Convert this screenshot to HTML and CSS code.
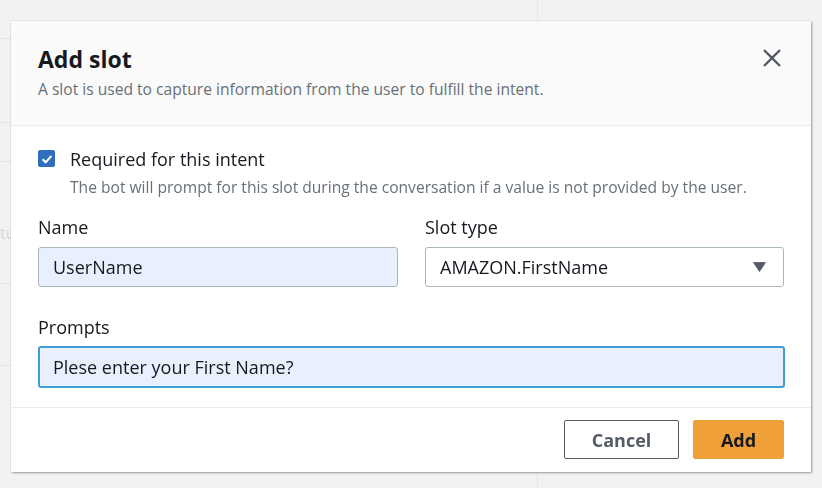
FILE: index.html
```html
<!DOCTYPE html>
<html>
<head>
<meta charset="utf-8">
<link rel="stylesheet" href="styles.css">
</head>
<body>
<div class="page">
  <div class="panel">
    <div class="row r1"></div>
    <div class="row r2"></div>
    <div class="row r3"></div>
    <div class="row r4"><span class="ghost">tu</span></div>
    <div class="row r5"></div>
  </div>
</div>

<div class="modal">
  <div class="modal-header">
    <div class="titles">
      <h1 class="title">Add slot</h1>
      <p class="subtitle">A slot is used to capture information from the user to fulfill the intent.</p>
    </div>
    <button class="close" aria-label="Close">
      <svg width="18" height="18" viewBox="0 0 18 18"><path d="M1 1L17 17M17 1L1 17" stroke="#545b64" stroke-width="2.3" fill="none"/></svg>
    </button>
  </div>
  <div class="modal-body">
    <div class="check-row">
      <span class="checkbox">
        <svg width="12" height="12" viewBox="0 0 12 12"><path d="M1.6 6.2L4.7 9.2L10.4 2.8" stroke="#fff" stroke-width="2" fill="none"/></svg>
      </span>
      <div class="check-text">
        <div class="check-label">Required for this intent</div>
        <div class="check-desc">The bot will prompt for this slot during the conversation if a value is not provided by the user.</div>
      </div>
    </div>
    <div class="grid">
      <div class="field">
        <label class="label">Name</label>
        <div class="input filled">UserName</div>
      </div>
      <div class="field">
        <label class="label">Slot type</label>
        <div class="input select">
          <span>AMAZON.FirstName</span>
          <svg width="13" height="10" viewBox="0 0 13 10"><path d="M0.5 0.5H12.5L6.5 9.5Z" fill="#545b64" stroke="#545b64" stroke-width="0.8" stroke-linejoin="round"/></svg>
        </div>
      </div>
    </div>
    <div class="field prompts">
      <label class="label">Prompts</label>
      <div class="input filled focused">Plese enter your First Name?</div>
    </div>
  </div>
  <div class="modal-footer">
    <button class="btn btn-cancel">Cancel</button>
    <button class="btn btn-add">Add</button>
  </div>
</div>
</body>
</html>
```

FILE: styles.css
```css
* { box-sizing: border-box; }
html, body { margin: 0; padding: 0; }
body {
  background: #f2f2f2;
  font-family: "Open Sans", "Noto Sans", sans-serif;
  color: #16191f;
  width: 822px;
  height: 488px;
  overflow: hidden;
}
.page { height: 488px; }
.panel {
  width: 538px;
  height: 488px;
  border-right: 1px solid #e6e6e6;
}
.row { border-bottom: 1px solid #e4e4e4; }
.r1 { height: 39px; }
.r2 { height: 84px; }
.r3 { height: 39px; }
.r4 { height: 122px; padding-top: 60px; }
.r5 { height: 82px; }
.ghost { display: inline-block; color: #d6d6d6; font-size: 16px; line-height: 18px; }

.modal {
  position: fixed;
  left: 11px;
  top: 21px;
  width: 800px;
  height: 451px;
  background: #fff;
  box-shadow: 1px 1px 2px rgba(0,0,0,0.35), 0 0 1px rgba(0,0,0,0.25);
  display: flex;
  flex-direction: column;
}
.modal-header {
  background: #fafafa;
  border-bottom: 1px solid #eaeded;
  height: 105px;
  flex: none;
  padding: 23px 30px 0 27px;
  display: flex;
  justify-content: space-between;
  align-items: flex-start;
}
.title {
  margin: 0;
  font-size: 23px;
  font-weight: 700;
  line-height: 30px;
  color: #16191f;
}
.subtitle {
  margin: 5px 0 0;
  font-size: 15.6px;
  line-height: 20px;
  color: #687078;
}
.close {
  background: none;
  border: 0;
  padding: 0;
  margin-top: 5px;
  width: 18px;
  height: 18px;
  display: flex;
}

.modal-body {
  flex: 1;
  padding: 21px 27px 0 27px;
  border-bottom: 1px solid #eaeded;
}
.check-row { display: flex; gap: 15px; }
.checkbox {
  flex: none;
  width: 17px;
  height: 17px;
  margin-top: 3px;
  background: #2f6eba;
  border-radius: 2px;
  display: flex;
  align-items: center;
  justify-content: center;
}
.check-label { font-size: 18px; line-height: 24px; }
.check-desc { font-size: 15.6px; line-height: 20px; color: #687078; margin-top: 6px; }

.grid {
  display: grid;
  grid-template-columns: 360px 359px;
  column-gap: 27px;
  margin-top: 18px;
}
.field { display: flex; flex-direction: column; }
.label { font-size: 18px; line-height: 24px; margin-bottom: 8px; }
.prompts { margin-top: 28px; }
.prompts .label { margin-bottom: 7px; }
.input {
  height: 40px;
  border: 1px solid #aab7b8;
  border-radius: 3px;
  font-size: 18px;
  padding: 0 14px;
  display: flex;
  align-items: center;
  color: #16191f;
}
.filled { background: #e8f0fe; }
.select { justify-content: space-between; padding-right: 17px; }
.focused {
  border: 2px solid #3f9fcf;
  height: 42px;
  padding-left: 13px;
  width: 747px;
}

.modal-footer {
  height: 64px;
  flex: none;
  display: flex;
  justify-content: flex-end;
  align-items: flex-start;
  gap: 14px;
  padding: 12px 27px 0 0;
}
.btn {
  height: 39px;
  font-family: inherit;
  font-size: 18px;
  font-weight: 700;
  border-radius: 2px;
  cursor: pointer;
}
.btn-cancel {
  width: 115px;
  background: #fff;
  border: 1px solid #545b64;
  color: #545b64;
}
.btn-add {
  width: 91px;
  background: #f0a038;
  border: 1px solid #f0a038;
  color: #16191f;
}
```
